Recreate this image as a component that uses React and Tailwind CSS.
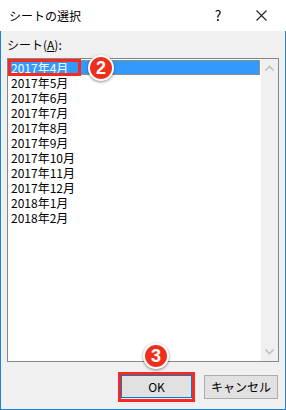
const months = [
  "2017年4月",
  "2017年5月",
  "2017年6月",
  "2017年7月",
  "2017年8月",
  "2017年9月",
  "2017年10月",
  "2017年11月",
  "2017年12月",
  "2018年1月",
  "2018年2月",
];

function Badge({ n, className }) {
  return (
    <div
      className={`absolute w-[26px] h-[26px] rounded-full bg-[#ee2f1c] border-[2px] border-white shadow-[0_1px_3px_rgba(0,0,0,0.45)] flex items-center justify-center text-white font-bold text-[18px] leading-none font-['Liberation_Sans',sans-serif] ${className}`}
    >
      {n}
    </div>
  );
}

function Chevron({ down }) {
  return (
    <svg width="9" height="6" viewBox="0 0 9 6" className={down ? "rotate-180" : ""}>
      <path d="M0.5 5.5 L4.5 1.5 L8.5 5.5" fill="none" stroke="#c2c2c2" strokeWidth="1.6" />
    </svg>
  );
}

export default function App() {
  return (
    <div className="w-[286px] h-[410px] flex flex-col text-[12px] text-black font-['Noto_Sans_CJK_JP',sans-serif] relative overflow-hidden">
      {/* title bar */}
      <div className="h-[31px] bg-white flex items-center pl-[9px]">
        <span className="flex-1 text-[12px]">シートの選択</span>
        <span className="w-[16px] text-center text-[14px] mr-[30px]">?</span>
        <svg width="11" height="11" viewBox="0 0 11 11" className="mr-[19px]">
          <path d="M0.5 0.5 L10.5 10.5 M10.5 0.5 L0.5 10.5" stroke="#222" strokeWidth="1.1" />
        </svg>
      </div>

      {/* body */}
      <div className="flex-1 bg-[#f0f0f0] border-x border-b border-[#1883d7] px-[6px] pt-[5px] flex flex-col">
        <div className="h-[17px] leading-[17px]">
          シート(<span className="underline">A</span>):
        </div>
        <div className="mt-[5px] h-[304px] border border-[#828790] bg-white flex">
          <div className="flex-1 p-[1px] relative">
            {months.map((m, i) => (
              <div
                key={m}
                className={`h-[15px] leading-[15px] pl-[2px] overflow-hidden ${
                  i === 0 ? "bg-[#3399ff] text-white outline outline-1 outline-dotted outline-[#e08a2a] -outline-offset-1" : ""
                }`}
              >
                {m}
              </div>
            ))}
            <div className="absolute left-0 top-0 w-[73px] h-[17px] border-[3px] border-[#f42b1e]" />
            <Badge n="2" className="left-[80px] top-[-4px]" />
          </div>
          <div className="w-[17px] bg-[#f0f0f0] flex flex-col items-center justify-between py-[6px]">
            <Chevron />
            <Chevron down />
          </div>
        </div>

        <div className="mt-[13px] flex justify-end gap-[12px] pr-[1px]">
          <div className="relative">
            <button className="w-[71px] h-[23px] bg-[#e1e1e1] border border-[#0078d7] text-[12px] leading-none">
              OK
            </button>
            <div className="absolute -inset-[3px] border-[3px] border-[#f42b1e]" />
            <Badge n="3" className="left-[22px] top-[-32px]" />
          </div>
          <button className="w-[74px] h-[24px] bg-[#e1e1e1] border border-[#adadad] text-[12px] leading-none">
            キャンセル
          </button>
        </div>
      </div>
    </div>
  );
}
